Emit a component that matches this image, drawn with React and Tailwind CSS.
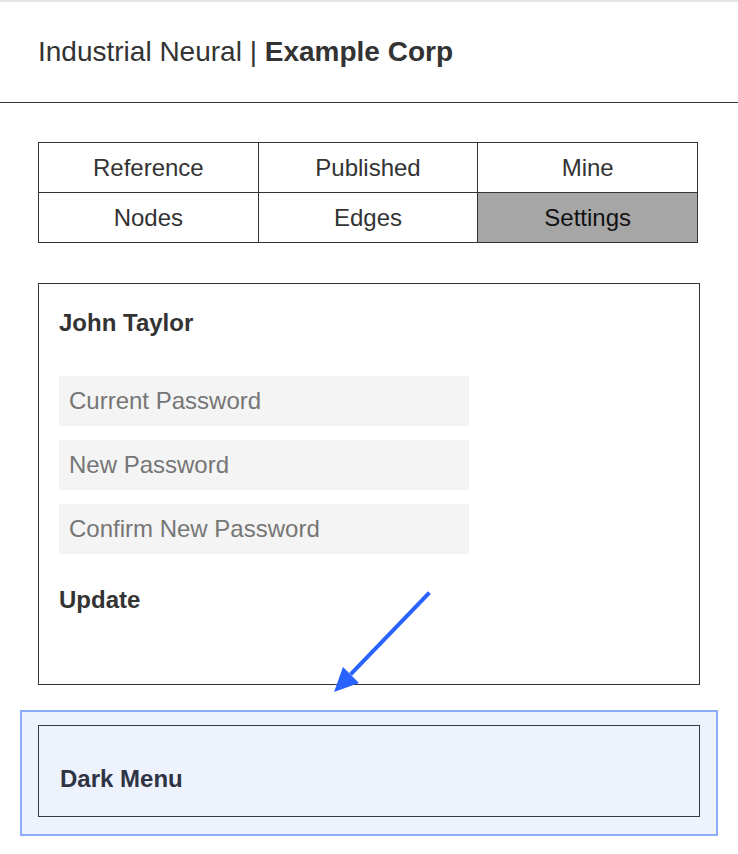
// App.jsx - Settings page with password form
import React from 'react';

const tabs = [
  { label: 'Reference' },
  { label: 'Published' },
  { label: 'Mine' },
  { label: 'Nodes' },
  { label: 'Edges' },
  { label: 'Settings', active: true },
];

const fields = ['Current Password', 'New Password', 'Confirm New Password'];

const App = () => {
  return (
    <div
      className="relative min-h-[854px] w-[738px] bg-white text-[#333]"
      style={{ fontFamily: '"Liberation Sans", Arial, sans-serif' }}
    >
      {/* Header */}
      <div className="flex h-[103px] items-center border-t-2 border-b border-t-[#e4e4e9] border-b-[#333] px-[38px]">
        <div className="text-[28px] leading-none">
          Industrial Neural | <span className="font-bold">Example Corp</span>
        </div>
      </div>

      <div className="pl-[38px] pr-[38px]">
        {/* Tab grid */}
        <div className="mt-[39px] grid w-[660px] grid-cols-3 border-t border-l border-[#333]">
          {tabs.map((tab) => (
            <div
              key={tab.label}
              className={`flex h-[50px] items-center justify-center border-r border-b border-[#333] text-[24px] ${
                tab.active ? 'bg-[#a6a6a6] text-[#111]' : 'bg-white text-[#333]'
              }`}
            >
              {tab.label}
            </div>
          ))}
        </div>

        {/* Account card */}
        <div className="mt-[40px] h-[402px] border border-[#333] px-[20px] pt-[25px]">
          <div className="text-[24px] font-bold leading-[28px]">John Taylor</div>
          <div className="mt-[39px] flex flex-col gap-[14px]">
            {fields.map((f) => (
              <input
                key={f}
                type="password"
                placeholder={f}
                className="h-[50px] w-[410px] bg-[#f4f4f4] px-[10px] text-[24px] text-[#333] outline-none placeholder:text-[#767676]"
              />
            ))}
          </div>
          <div className="mt-[32px] text-[24px] font-bold leading-[28px]">Update</div>
        </div>

        {/* Dark menu (highlighted) */}
        <div className="mt-[25px] -mx-[18px] border-2 border-[#8aabf7] bg-[#eef2fd] px-[16px] pt-[13px] pb-[17px]">
          <div className="h-[92px] border border-[#333a48] px-[21px] pt-[39px] text-[24px] font-bold leading-[28px] text-[#2e3444]">
            Dark Menu
          </div>
        </div>
      </div>

      {/* Annotation arrow */}
      <svg className="pointer-events-none absolute left-0 top-0" width="738" height="854">
        <line x1="428" y1="594" x2="352" y2="673" stroke="#2962ff" strokeWidth="4" strokeLinecap="square" />
        <polygon points="334,692 343,667 359,683" fill="#2962ff" />
      </svg>
    </div>
  );
};

export default App;
